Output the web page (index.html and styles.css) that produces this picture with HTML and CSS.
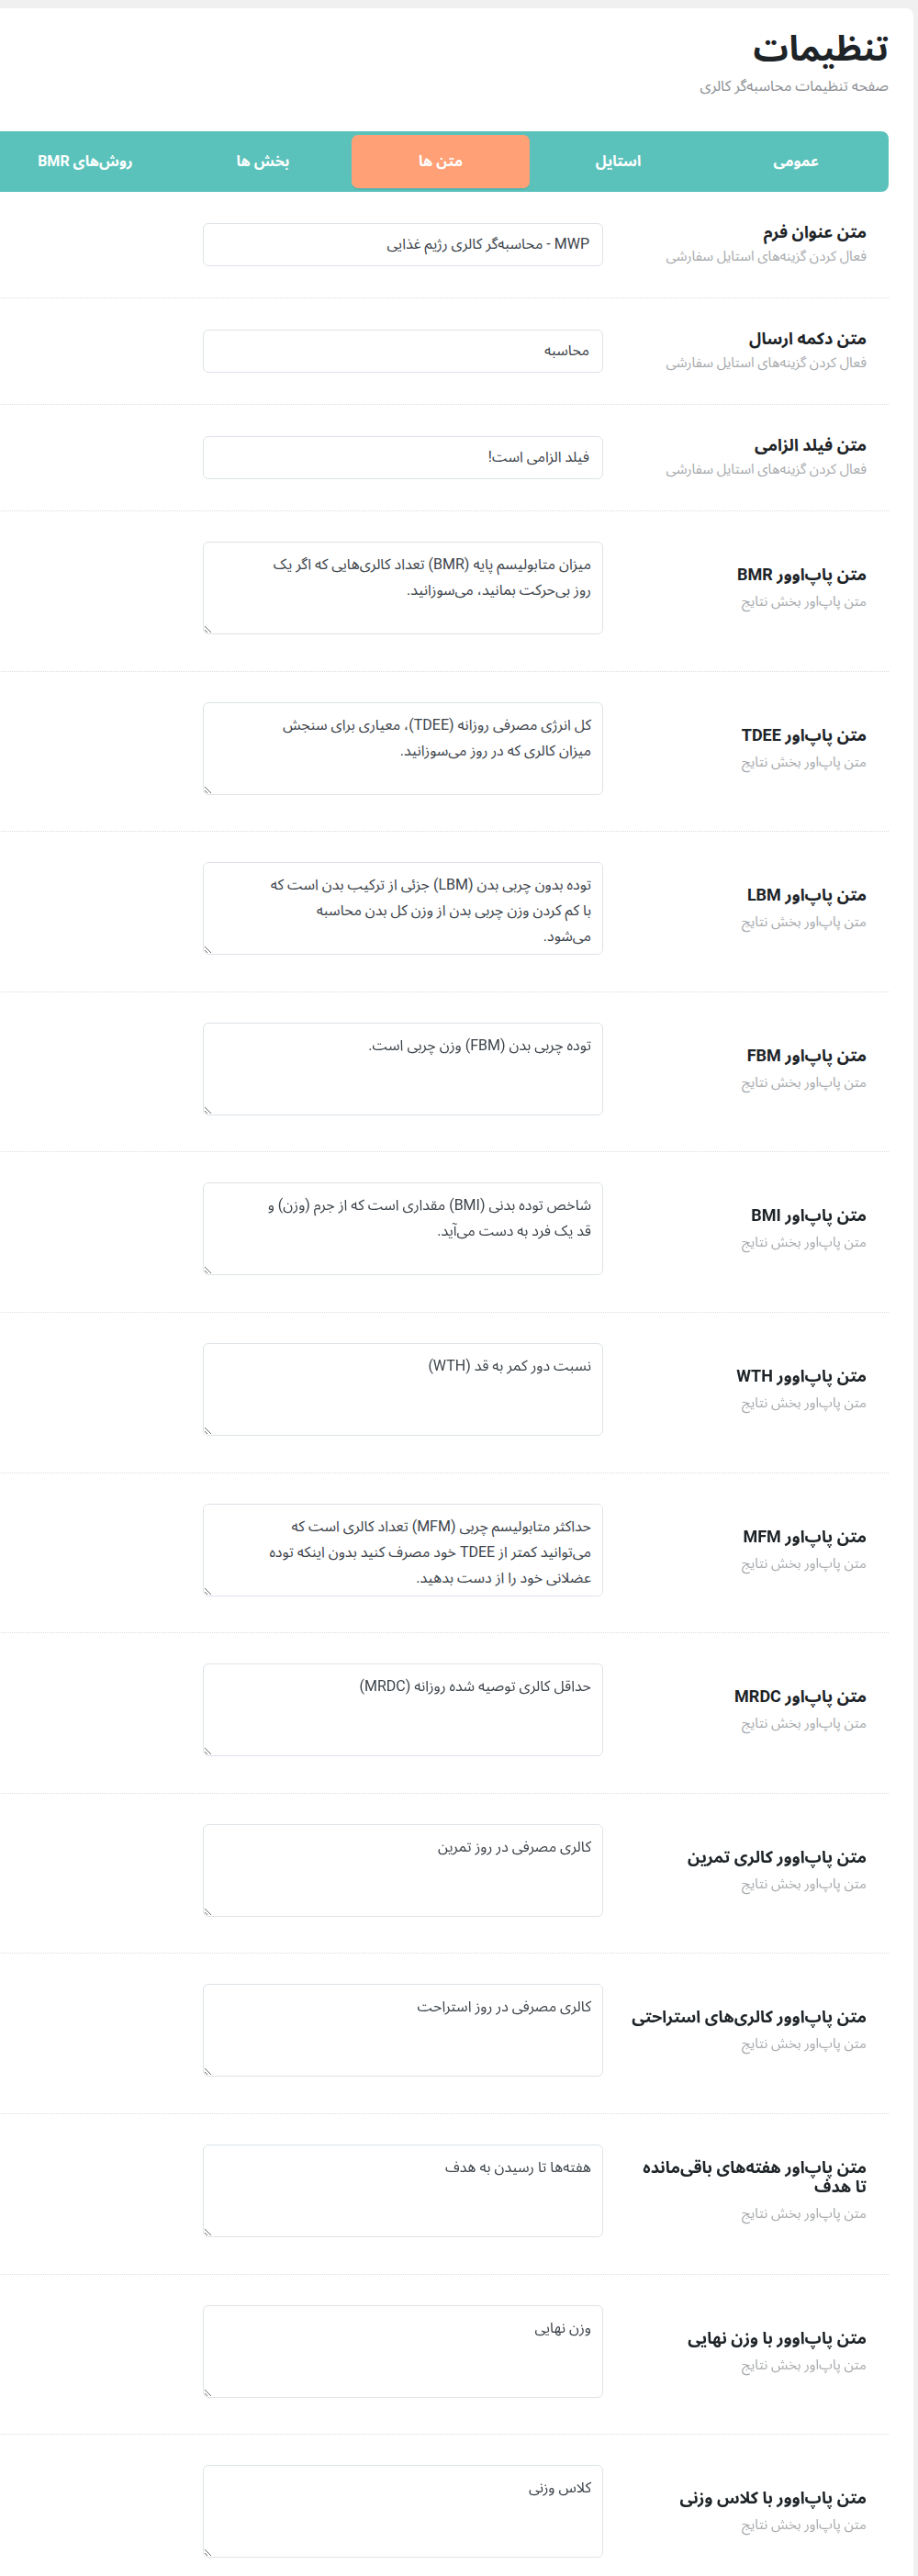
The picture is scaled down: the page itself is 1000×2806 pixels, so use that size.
FILE: index.html
```html
<!DOCTYPE html>
<html lang="fa" dir="rtl">
<head>
<meta charset="utf-8">
<title>تنظیمات</title>
<link rel="stylesheet" href="styles.css">
</head>
<body>
<div class="page">
  <div class="card">
    <h1 class="title">تنظیمات</h1>
    <p class="subtitle">صفحه تنظیمات محاسبه‌گر کالری</p>

    <nav class="tabs">
      <div class="tab">عمومی</div>
      <div class="tab">استایل</div>
      <div class="tab tab-active">متن ها</div>
      <div class="tab">بخش ها</div>
      <div class="tab">روش‌های BMR</div>
    </nav>

    <div class="rows">
      <div class="row">
        <div class="label"><div class="label-title">متن عنوان فرم</div><div class="label-desc">فعال کردن گزینه‌های استایل سفارشی</div></div>
        <div class="field"><input class="input" type="text" value="MWP - محاسبه‌گر کالری رژیم غذایی"></div>
      </div>
      <div class="row">
        <div class="label"><div class="label-title">متن دکمه ارسال</div><div class="label-desc">فعال کردن گزینه‌های استایل سفارشی</div></div>
        <div class="field"><input class="input" type="text" value="محاسبه"></div>
      </div>
      <div class="row">
        <div class="label"><div class="label-title">متن فیلد الزامی</div><div class="label-desc">فعال کردن گزینه‌های استایل سفارشی</div></div>
        <div class="field"><input class="input" type="text" value="فیلد الزامی است!"></div>
      </div>

      <div class="row row-area">
        <div class="label"><div class="label-title">متن پاپ‌اوور BMR</div><div class="label-desc">متن پاپ‌اور بخش نتایج</div></div>
        <div class="field"><textarea class="area">میزان متابولیسم پایه (BMR) تعداد کالری‌هایی که اگر یک
روز بی‌حرکت بمانید، می‌سوزانید.</textarea></div>
      </div>
      <div class="row row-area">
        <div class="label"><div class="label-title">متن پاپ‌اور TDEE</div><div class="label-desc">متن پاپ‌اور بخش نتایج</div></div>
        <div class="field"><textarea class="area">کل انرژی مصرفی روزانه (TDEE)، معیاری برای سنجش
میزان کالری که در روز می‌سوزانید.</textarea></div>
      </div>
      <div class="row row-area">
        <div class="label"><div class="label-title">متن پاپ‌اور LBM</div><div class="label-desc">متن پاپ‌اور بخش نتایج</div></div>
        <div class="field"><textarea class="area">توده بدون چربی بدن (LBM) جزئی از ترکیب بدن است که
با کم کردن وزن چربی بدن از وزن کل بدن محاسبه
می‌شود.</textarea></div>
      </div>
      <div class="row row-area">
        <div class="label"><div class="label-title">متن پاپ‌اور FBM</div><div class="label-desc">متن پاپ‌اور بخش نتایج</div></div>
        <div class="field"><textarea class="area">توده چربی بدن (FBM) وزن چربی است.</textarea></div>
      </div>
      <div class="row row-area">
        <div class="label"><div class="label-title">متن پاپ‌اور BMI</div><div class="label-desc">متن پاپ‌اور بخش نتایج</div></div>
        <div class="field"><textarea class="area">شاخص توده بدنی (BMI) مقداری است که از جرم (وزن) و
قد یک فرد به دست می‌آید.</textarea></div>
      </div>
      <div class="row row-area">
        <div class="label"><div class="label-title">متن پاپ‌اوور WTH</div><div class="label-desc">متن پاپ‌اور بخش نتایج</div></div>
        <div class="field"><textarea class="area">نسبت دور کمر به قد (WTH)</textarea></div>
      </div>
      <div class="row row-area">
        <div class="label"><div class="label-title">متن پاپ‌اور MFM</div><div class="label-desc">متن پاپ‌اور بخش نتایج</div></div>
        <div class="field"><textarea class="area">حداکثر متابولیسم چربی (MFM) تعداد کالری است که
می‌توانید کمتر از TDEE خود مصرف کنید بدون اینکه توده
عضلانی خود را از دست بدهید.</textarea></div>
      </div>
      <div class="row row-area">
        <div class="label"><div class="label-title">متن پاپ‌اور MRDC</div><div class="label-desc">متن پاپ‌اور بخش نتایج</div></div>
        <div class="field"><textarea class="area">حداقل کالری توصیه شده روزانه (MRDC)</textarea></div>
      </div>
      <div class="row row-area">
        <div class="label"><div class="label-title">متن پاپ‌اوور کالری تمرین</div><div class="label-desc">متن پاپ‌اور بخش نتایج</div></div>
        <div class="field"><textarea class="area">کالری مصرفی در روز تمرین</textarea></div>
      </div>
      <div class="row row-area">
        <div class="label"><div class="label-title">متن پاپ‌اوور کالری‌های استراحتی</div><div class="label-desc">متن پاپ‌اور بخش نتایج</div></div>
        <div class="field"><textarea class="area">کالری مصرفی در روز استراحت</textarea></div>
      </div>
      <div class="row row-area">
        <div class="label"><div class="label-title">متن پاپ‌اور هفته‌های باقی‌مانده<br>تا هدف</div><div class="label-desc">متن پاپ‌اور بخش نتایج</div></div>
        <div class="field"><textarea class="area">هفته‌ها تا رسیدن به هدف</textarea></div>
      </div>
      <div class="row row-area">
        <div class="label"><div class="label-title">متن پاپ‌اوور با وزن نهایی</div><div class="label-desc">متن پاپ‌اور بخش نتایج</div></div>
        <div class="field"><textarea class="area">وزن نهایی</textarea></div>
      </div>
      <div class="row row-area">
        <div class="label"><div class="label-title">متن پاپ‌اوور با کلاس وزنی</div><div class="label-desc">متن پاپ‌اور بخش نتایج</div></div>
        <div class="field"><textarea class="area">کلاس وزنی</textarea></div>
      </div>
    </div>
  </div>
</div>
</body>
</html>
```

FILE: styles.css
```css
html, body {
  margin: 0;
  padding: 0;
  overflow-x: hidden;
  background: #f0f0f1;
}

body {
  font-family: Roboto, "Noto Sans Arabic", "DejaVu Sans", sans-serif;
  color: #1d2327;
}

.page {
  padding: 9px 5px 0 0;
}

.card {
  background: #ffffff;
  margin-left: -35px;
  padding: 20px 27px 0 27px;
  border-radius: 0 8px 0 0;
  min-height: 2900px;
}

.title {
  margin: 0;
  font-size: 38px;
  line-height: 48px;
  font-weight: 700;
  color: #1d2327;
}

.subtitle {
  margin: 6px 0 0;
  font-size: 16px;
  line-height: 22px;
  color: #8c8f94;
}

.tabs {
  display: flex;
  margin-top: 38px;
  padding: 4px;
  background: #5bc2bb;
  border-radius: 8px;
  height: 58px;
}

.tab {
  flex: 1;
  display: flex;
  align-items: center;
  justify-content: center;
  color: #ffffff;
  font-weight: 700;
  font-size: 16px;
  border-radius: 7px;
}

.tab-active {
  background: #ffa076;
  box-shadow: 0 2px 0 rgba(0, 0, 0, 0.06);
}

.row {
  display: flex;
  align-items: center;
  padding: 33px 24px 34px;
  border-bottom: 1px dotted #dcdcde;
}

.row-area {
  padding-bottom: 39.6px;
}

.label {
  width: 258px;
  flex: none;
}

.label-title {
  font-size: 18px;
  line-height: 21px;
  font-weight: 700;
  color: #1d2327;
  white-space: nowrap;
}

.label-desc {
  margin-top: 5px;
  font-size: 15px;
  line-height: 22px;
  color: #a7aaad;
}

.row-area .label-desc {
  margin-top: 8px;
}

.field {
  margin-right: 29px;
  width: 436px;
  flex: none;
}

.input,
.area {
  display: block;
  box-sizing: border-box;
  width: 436px;
  border: 1px solid #dde3e8;
  border-radius: 6px;
  background: #ffffff;
  font-family: Roboto, "Noto Sans Arabic", "DejaVu Sans", sans-serif;
  font-size: 16px;
  color: #3c434a;
  margin: 0;
  outline: none;
}

.input {
  height: 47px;
  padding: 0 14px;
}

.area {
  height: 101px;
  padding: 10px 12px;
  line-height: 28px;
  resize: vertical;
}
```
